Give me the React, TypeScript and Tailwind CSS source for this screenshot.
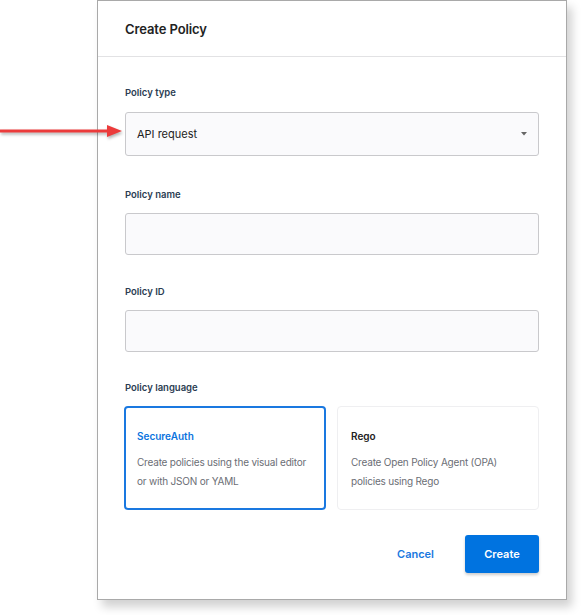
import { FC, ReactElement } from "react";

const Label: FC<{ text: string }> = ({ text }) => (
  <div className="text-[9.5px] leading-[12px] font-semibold text-[#2b3d52]">{text}</div>
);

const TextInput: FC = () => (
  <div className="mt-[12px] h-[42px] rounded-[3px] border border-[#c9c9cc] bg-[#fafafc]" />
);

const App: FC = (): ReactElement => {
  return (
    <div className="relative w-[582px] h-[615px] bg-white font-['Inter',sans-serif] overflow-hidden">
      <section className="ml-[97px] w-[470px] h-[600px] flex flex-col border border-[#a9a9a9] bg-white shadow-[5px_7px_9px_rgba(0,0,0,0.18)]">
        <header className="h-[56px] shrink-0 flex items-center pt-[2px] px-[27px] border-b border-[#e2e2e4]">
          <h1 className="text-[13px] font-semibold text-[#222] tracking-[-0.1px]">Create Policy</h1>
        </header>

        <div className="flex flex-col px-[27px] pt-[30px]">
          <Label text="Policy type" />
          <div className="mt-[13px] h-[44px] flex items-center justify-between px-[11px] rounded-[3px] border border-[#c9c9cc] bg-[#fafafc]">
            <span className="text-[11px] text-[#222]">API request</span>
            <svg width="6" height="4" viewBox="0 0 6 4">
              <path d="M0 0h6L3 3.5z" fill="#666" />
            </svg>
          </div>

          <div className="mt-[33px]">
            <Label text="Policy name" />
          </div>
          <TextInput />

          <div className="mt-[31px]">
            <Label text="Policy ID" />
          </div>
          <TextInput />

          <div className="mt-[30px]">
            <Label text="Policy language" />
          </div>
          <div className="mt-[12px] -ml-px grid grid-cols-2 gap-[11px] h-[104px]">
            <div className="rounded-[4px] border-2 border-[#1a78e0] px-[11px] pt-[22px]">
              <div className="text-[10px] leading-[13px] font-semibold text-[#0b74de]">SecureAuth</div>
              <p className="mt-[10px] text-[10px] tracking-[-0.2px] leading-[19px] text-[#6b6e75]">
                Create policies using the visual editor or with JSON or YAML
              </p>
            </div>
            <div className="rounded-[4px] border border-[#efeff1] px-[13px] pt-[23px]">
              <div className="text-[10px] leading-[13px] font-semibold text-[#222]">Rego</div>
              <p className="mt-[10px] text-[10px] tracking-[-0.2px] leading-[19px] text-[#6b6e75]">
                Create Open Policy Agent (OPA) policies using Rego
              </p>
            </div>
          </div>

          <div className="mt-[25px] flex items-center justify-end gap-[31px]">
            <button type="button" className="text-[11px] font-semibold text-[#1a78e0]">
              Cancel
            </button>
            <button
              type="button"
              className="w-[74px] h-[38px] rounded-[3px] bg-[#0073e0] text-[11px] font-semibold text-white shadow-[0_2px_3px_rgba(0,0,0,0.2)]"
            >
              Create
            </button>
          </div>
        </div>
      </section>

      {/* red callout arrow pointing at the policy type select */}
      <svg
        className="absolute left-0 top-[123px] drop-shadow-[1px_2px_1.5px_rgba(0,0,0,0.3)]"
        width="126"
        height="18"
        viewBox="0 0 126 18"
      >
        <rect x="0" y="6.5" width="110" height="3" fill="#ec3b3b" />
        <path d="M107 2L122 8L107 14z" fill="#ec3b3b" />
      </svg>
    </div>
  );
};

export default App;
